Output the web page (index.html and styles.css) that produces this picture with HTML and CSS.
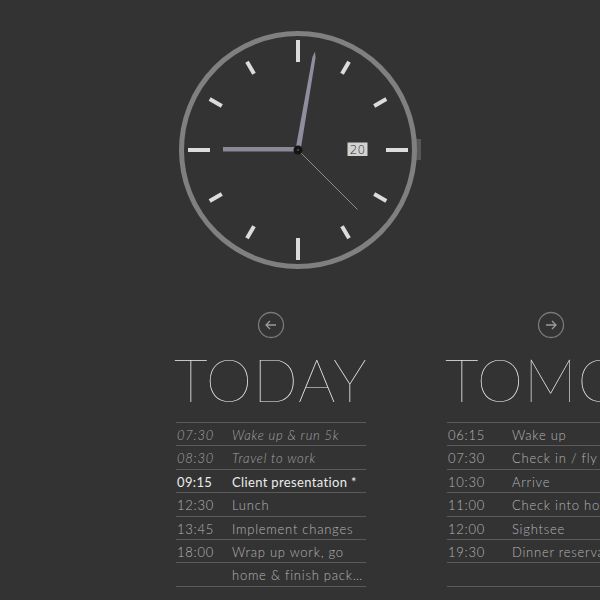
FILE: index.html
```html
<!DOCTYPE html>
<html>
<head>
<meta charset="utf-8">
<link rel="stylesheet" href="styles.css">
</head>
<body>
<div class="clock-row">
  <svg class="clock" width="260" height="260" viewBox="-130 -130 260 260">
    <rect x="117" y="-11" width="6" height="21" fill="#575757"/>
    <circle r="116.5" fill="none" stroke="#808080" stroke-width="5"/>
    <g stroke="#dcdcdc" stroke-width="4">
      <line x1="0" y1="-88" x2="0" y2="-110"/>
      <line x1="88" y1="0" x2="110" y2="0"/>
      <line x1="0" y1="88" x2="0" y2="110"/>
      <line x1="-88" y1="0" x2="-110" y2="0"/>
      <g id="minor">
        <line x1="0" y1="-88" x2="0" y2="-102" transform="rotate(30)"/>
        <line x1="0" y1="-88" x2="0" y2="-102" transform="rotate(60)"/>
        <line x1="0" y1="-88" x2="0" y2="-102" transform="rotate(120)"/>
        <line x1="0" y1="-88" x2="0" y2="-102" transform="rotate(150)"/>
        <line x1="0" y1="-88" x2="0" y2="-102" transform="rotate(210)"/>
        <line x1="0" y1="-88" x2="0" y2="-102" transform="rotate(240)"/>
        <line x1="0" y1="-88" x2="0" y2="-102" transform="rotate(300)"/>
        <line x1="0" y1="-88" x2="0" y2="-102" transform="rotate(330)"/>
      </g>
    </g>
    <rect x="49.5" y="-7.5" width="20" height="13.5" fill="#d2d2d2"/>
    <text x="59.5" y="4.3" class="date">20</text>
    <rect x="-75" y="-3" width="75" height="4.5" fill="#8a8a96"/>
    <polygon points="-2.6,3 2.6,3 1.6,-94 0,-100 -1.6,-94" fill="#8e8e9e" transform="rotate(9.8)"/>
    <line x1="0" y1="0" x2="59.5" y2="59.5" stroke="#8a8a8a" stroke-width="1"/>
    <circle r="4.5" fill="#141414"/>
    <circle r="1" fill="#555"/>
  </svg>
</div>

<div class="days">
  <section class="day today">
    <div class="nav">
      <svg width="28" height="28" viewBox="0 0 28 28">
        <circle cx="14" cy="14" r="12.5" fill="none" stroke="#7a7a7a" stroke-width="1.3"/>
        <path d="M19 14H9M13 10L9 14L13 18" fill="none" stroke="#9a9a9a" stroke-width="1.3"/>
      </svg>
    </div>
    <h1>TODAY</h1>
    <div class="list">
      <div class="row past"><span class="t">07:30</span><span class="e">Wake up &amp; run 5k</span></div>
      <div class="row past"><span class="t">08:30</span><span class="e">Travel to work</span></div>
      <div class="row now"><span class="t">09:15</span><span class="e">Client presentation *</span></div>
      <div class="row"><span class="t">12:30</span><span class="e">Lunch</span></div>
      <div class="row"><span class="t">13:45</span><span class="e">Implement changes</span></div>
      <div class="row"><span class="t">18:00</span><span class="e">Wrap up work, go<span class="cut">home &amp; finish packing</span></span></div>
    </div>
  </section>
  <section class="day tomorrow">
    <div class="nav">
      <svg width="28" height="28" viewBox="0 0 28 28">
        <circle cx="14" cy="14" r="12.5" fill="none" stroke="#7a7a7a" stroke-width="1.3"/>
        <path d="M9 14H19M15 10L19 14L15 18" fill="none" stroke="#9a9a9a" stroke-width="1.3"/>
      </svg>
    </div>
    <h1>TOMORROW</h1>
    <div class="list">
      <div class="row"><span class="t">06:15</span><span class="e">Wake up</span></div>
      <div class="row"><span class="t">07:30</span><span class="e">Check in / fly</span></div>
      <div class="row"><span class="t">10:30</span><span class="e">Arrive</span></div>
      <div class="row"><span class="t">11:00</span><span class="e">Check into hotel</span></div>
      <div class="row"><span class="t">12:00</span><span class="e">Sightsee</span></div>
      <div class="row"><span class="t">19:30</span><span class="e">Dinner reservation</span></div>
    </div>
  </section>
</div>
</body>
</html>
```

FILE: styles.css
```css
html, body {
  margin: 0;
  padding: 0;
  background: #333333;
  overflow: hidden;
  width: 600px;
  height: 600px;
}
body {
  font-family: Lato, "Open Sans", sans-serif;
  color: #b4b4b4;
}
.clock-row {
  display: flex;
  padding: 20px 0 0 168px;
}
.clock .date {
  font-family: "DejaVu Sans", sans-serif;
  font-size: 12px;
  fill: #2a2a2a;
  text-anchor: middle;
  font-weight: 300;
}
.days {
  display: flex;
  gap: 81px;
  padding-left: 176px;
  margin-top: 31px;
  white-space: nowrap;
}
.day {
  display: flex;
  flex-direction: column;
  flex: none;
}
.today { width: 190px; --tw: 56px; }
.tomorrow { width: 208px; --tw: 65px; }
.nav {
  display: flex;
  justify-content: center;
  height: 28px;
}
.nav svg { display: block; }
h1 {
  margin: 11px 0 0 -2px;
  font-family: Lato, sans-serif;
  font-weight: 100;
  font-size: 59px;
  line-height: 59px;
  color: #eeeeee;
  letter-spacing: 1px;
}
.list {
  margin-top: 13px;
  border-top: 1px solid #5a5a5a;
  height: 163.8px;
  background: repeating-linear-gradient(to bottom, transparent 0, transparent 22.4px, #5a5a5a 22.4px, #5a5a5a 23.4px);
  font-size: 13px;
  line-height: 23.4px;
  font-weight: 300;
  letter-spacing: 0.75px;
}
.row {
  display: flex;
  padding-top: 1px;
}
.row + .row { padding-top: 0; }
.t {
  flex: none;
  width: var(--tw);
  padding-left: 1px;
  box-sizing: border-box;
}
.e {
  flex: 1;
  min-width: 0;
}
.cut {
  display: block;
  width: 131px;
  overflow: hidden;
  text-overflow: ellipsis;
}
.past {
  font-style: italic;
  color: #a2a2a2;
}
.now {
  color: #ececec;
  font-weight: 400;
  letter-spacing: 0.35px;
}
```
